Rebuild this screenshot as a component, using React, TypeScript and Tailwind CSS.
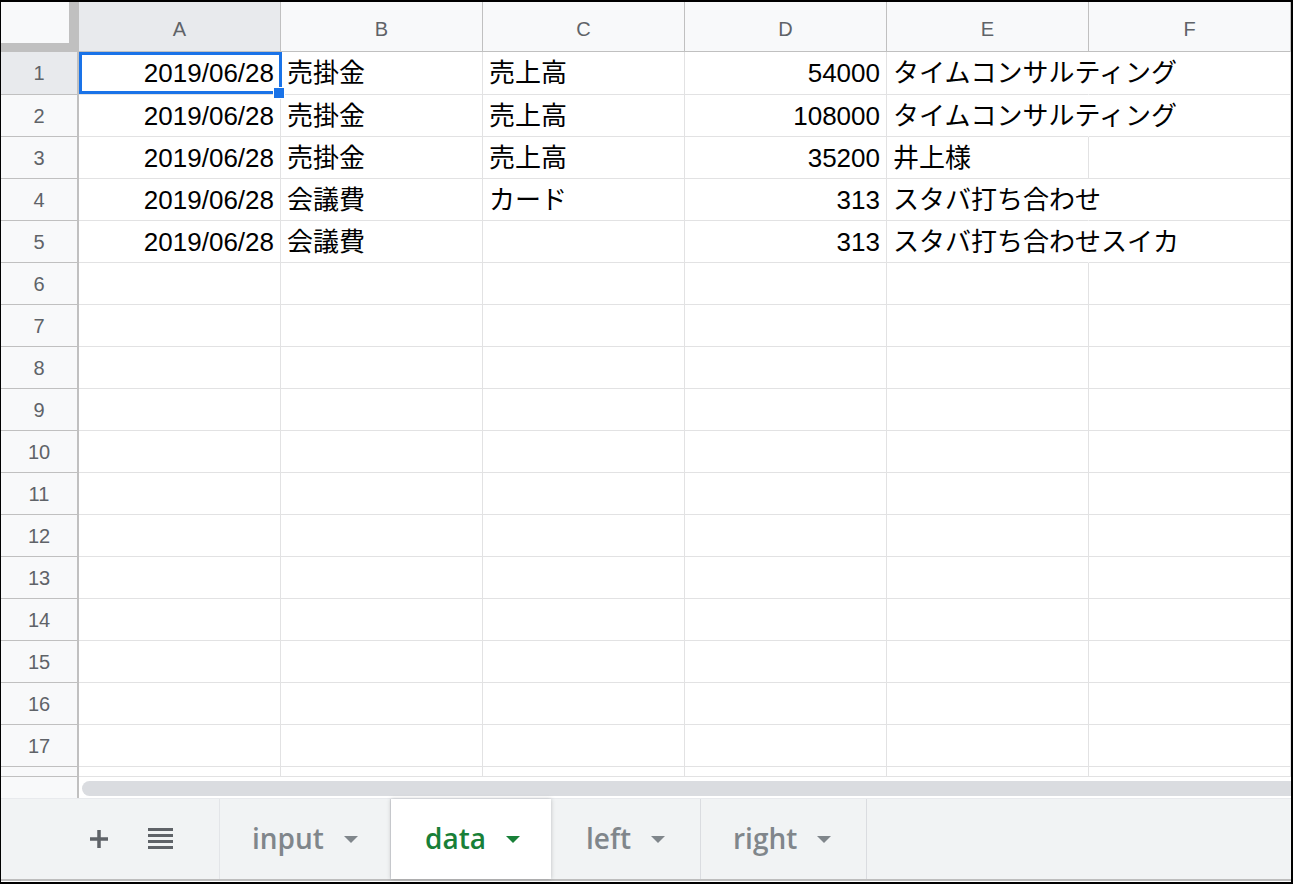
import React from 'react'

type Row = {
  a?: string
  b?: string
  c?: string
  d?: string
  e?: string
  spill?: boolean
}

const columns = ['A', 'B', 'C', 'D', 'E', 'F']

const data: Row[] = [
  { a: '2019/06/28', b: '売掛金', c: '売上高', d: '54000', e: 'タイムコンサルティング', spill: true },
  { a: '2019/06/28', b: '売掛金', c: '売上高', d: '108000', e: 'タイムコンサルティング', spill: true },
  { a: '2019/06/28', b: '売掛金', c: '売上高', d: '35200', e: '井上様' },
  { a: '2019/06/28', b: '会議費', c: 'カード', d: '313', e: 'スタバ打ち合わせ', spill: true },
  { a: '2019/06/28', b: '会議費', d: '313', e: 'スタバ打ち合わせスイカ', spill: true },
]

const rows: Row[] = Array.from({ length: 17 }, (_, i) => data[i] ?? {})

const cell =
  'w-[202px] shrink-0 h-full border-b border-[#e2e2e3] px-[6px] flex items-center whitespace-nowrap text-[26px] leading-[26px] text-black'

function Arrow({ color }: { color: string }) {
  return (
    <svg width="14" height="7" viewBox="0 0 14 7">
      <polygon points="0,0 14,0 7,7" fill={color} />
    </svg>
  )
}

function SheetTab({
  label,
  active,
  width,
  pad,
}: {
  label: string
  active?: boolean
  width: string
  pad: string
}) {
  return (
    <div
      className={`${width} ${pad} h-full shrink-0 flex items-center gap-[20px] ${
        active
          ? 'relative z-10 bg-white shadow-[0_0_4px_rgba(60,64,67,0.3)]'
          : 'border-r border-[#dadce0]'
      }`}
    >
      <span
        className={`font-['Open_Sans',sans-serif] text-[28px] font-semibold leading-none pb-[2px] ${
          active ? 'text-[#188038]' : 'text-[#80868b]'
        }`}
      >
        {label}
      </span>
      <Arrow color={active ? '#188038' : '#80868b'} />
    </div>
  )
}

export default function App() {
  return (
    <div className="w-[1293px] h-[884px] bg-white border-t-2 border-l border-r-2 border-b-2 border-black overflow-hidden flex flex-col font-['Liberation_Sans','Noto_Sans_CJK_JP',sans-serif]">
      {/* grid */}
      <div className="relative">
        {/* column header */}
        <div className="flex h-[50px]">
          <div className="w-[78px] shrink-0 h-full bg-[#c0c0c0]">
            <div className="w-[68px] h-[41px] bg-[#f8f9fa]" />
          </div>
          {columns.map((c) => (
            <div
              key={c}
              className={`w-[202px] shrink-0 h-full border-r border-b border-[#c0c0c0] flex items-center justify-center pt-[4px] text-[20px] text-[#5f6368] ${
                c === 'A' ? 'bg-[#e8eaed]' : 'bg-[#f8f9fa]'
              }`}
            >
              {c}
            </div>
          ))}
        </div>

        {rows.map((r, i) => (
          <div key={i} className={`flex ${i === 0 ? 'h-[43px]' : 'h-[42px]'}`}>
            <div
              className={`w-[78px] shrink-0 h-full border-r-2 border-b border-[#c0c0c0] flex items-center justify-center text-[20px] text-[#5f6368] ${
                i === 0 ? 'bg-[#e8eaed]' : 'bg-[#f8f9fa]'
              }`}
            >
              {i + 1}
            </div>
            <div className={`${cell} border-r justify-end`}>{r.a}</div>
            <div className={`${cell} border-r`}>{r.b}</div>
            <div className={`${cell} border-r`}>{r.c}</div>
            <div className={`${cell} border-r justify-end`}>{r.d}</div>
            <div className={`${cell} border-r ${r.spill ? 'border-r-transparent' : ''}`}>{r.e}</div>
            <div className={`${cell} border-r`} />
          </div>
        ))}

        {/* partial row 18 */}
        <div className="flex h-[10px]">
          <div className="w-[78px] shrink-0 h-full border-r-2 border-b border-[#c0c0c0] bg-[#f8f9fa]" />
          {columns.map((c) => (
            <div key={c} className="w-[202px] shrink-0 h-full border-r border-b border-[#e2e2e3]" />
          ))}
        </div>

        {/* selection on A1 */}
        <div className="absolute left-[78px] top-[50px] w-[203px] h-[42px] border-[3px] border-[#1a73e8]" />
        <div className="absolute left-[272px] top-[85px] w-[12px] h-[12px] bg-[#1a73e8] border border-white" />
      </div>

      {/* horizontal scrollbar */}
      <div className="flex h-[22px] border-b border-[#e8eaed]">
        <div className="w-[78px] shrink-0 h-full bg-[#f8f9fa] border-r-2 border-[#c0c0c0]" />
        <div className="flex-1 pl-[3px] pt-[4px]">
          <div className="h-[15px] rounded-l-full bg-[#dadce0]" />
        </div>
      </div>

      {/* sheet tabs */}
      <div className="flex h-[82px] bg-[#f1f3f4] border-b-2 border-[#bdbdbd]">
        <div className="w-[219px] shrink-0 h-full border-r border-[#e3e5e8] flex items-center pl-[88px] gap-[39px]">
          <svg width="20" height="20" viewBox="0 0 20 20">
            <path d="M10 1v18M1 10h18" stroke="#5f6368" strokeWidth="3.5" />
          </svg>
          <svg width="25" height="22" viewBox="0 0 25 22">
            <rect x="0" y="0" width="25" height="3" fill="#5f6368" />
            <rect x="0" y="6" width="25" height="3" fill="#5f6368" />
            <rect x="0" y="12" width="25" height="3" fill="#5f6368" />
            <rect x="0" y="18" width="25" height="3" fill="#5f6368" />
          </svg>
        </div>
        <SheetTab label="input" width="w-[171px]" pad="pl-[32px]" />
        <SheetTab label="data" active width="w-[160px]" pad="pl-[34px]" />
        <SheetTab label="left" width="w-[150px]" pad="pl-[35px]" />
        <SheetTab label="right" width="w-[166px]" pad="pl-[32px]" />
      </div>
      <div className="h-[1px] bg-white" />
    </div>
  )
}
